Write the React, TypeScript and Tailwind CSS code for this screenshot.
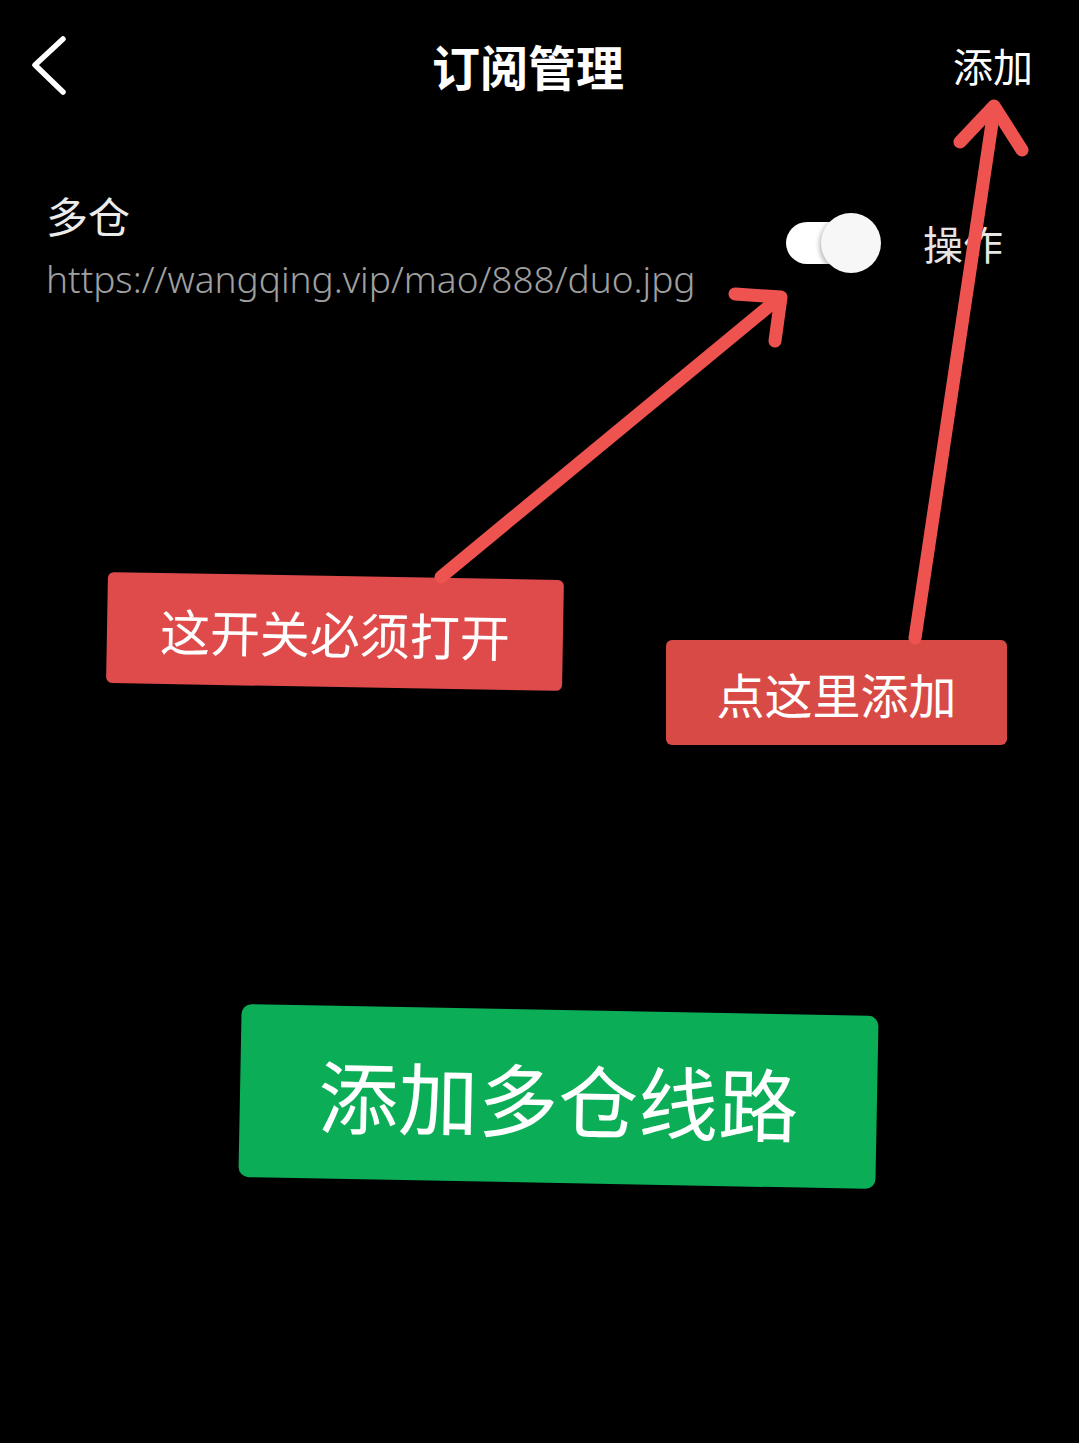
import React from "react";

const cjk = { fontFamily: '"Noto Sans CJK SC", "Noto Sans", sans-serif' };
const latin = { fontFamily: '"Noto Sans", "Noto Sans CJK SC", sans-serif' };

export default function App() {
  return (
    <div className="relative w-[1079px] h-[1443px] bg-black overflow-hidden" style={cjk}>
      {/* Header */}
      <div className="flex items-center h-[130px] pl-[30px] pr-[46px]">
        <svg width="40" height="60" viewBox="0 0 40 60" className="shrink-0 mt-[2px]">
          <polyline points="33,3 5,29 33,56" fill="none" stroke="#ffffff" strokeWidth="5.5" strokeLinecap="round" strokeLinejoin="round" />
        </svg>
        <div className="ml-[362px] text-[48px] leading-none font-bold text-white">订阅管理</div>
        <div className="ml-auto text-[40px] leading-none text-white">添加</div>
      </div>

      {/* Item row */}
      <div className="flex items-start pl-[46px] pr-[76px] mt-[60px]">
        <div className="flex flex-col">
          <div className="text-[42px] leading-[50px] text-[#ececec]">多仓</div>
          <div className="mt-[16px] text-[37px] leading-[46px] text-[#a0a0a0] font-light" style={latin}>
            https://wangqing.vip/mao/888/duo.jpg
          </div>
        </div>
        <div className="ml-auto flex items-center mt-[23px]">
          <div className="relative w-[95px] h-[60px] flex items-center">
            <div className="w-[80px] h-[42px] rounded-full bg-white" />
            <div className="absolute right-0 top-0 w-[60px] h-[60px] rounded-full bg-[#f7f7f7] shadow-[-2px_2px_4px_rgba(0,0,0,0.25)]" />
          </div>
          <div className="ml-[42px] text-[40px] leading-none text-[#e6e6e6]">操作</div>
        </div>
      </div>

      {/* Annotation labels */}
      <div className="absolute left-[107px] top-[576px] w-[456px] h-[111px] rounded-[6px] bg-[#df4b4b] rotate-[1deg] flex items-center justify-center">
        <span className="text-[50px] leading-none text-white">这开关必须打开</span>
      </div>
      <div className="absolute left-[666px] top-[640px] w-[341px] h-[105px] rounded-[6px] bg-[#d84a45] flex items-center justify-center">
        <span className="text-[48px] leading-none text-white">点这里添加</span>
      </div>

      {/* Green button */}
      <div className="absolute left-[240px] top-[1010px] w-[637px] h-[173px] rounded-[10px] bg-[#0bad57] rotate-[1.08deg] flex items-center justify-center">
        <span className="text-[80px] leading-none text-white">添加多仓线路</span>
      </div>

      {/* Arrows */}
      <svg className="absolute inset-0 pointer-events-none" width="1079" height="1443" viewBox="0 0 1079 1443">
        <g fill="none" stroke="#ee5350" strokeWidth="13" strokeLinecap="round" strokeLinejoin="round">
          <line x1="441" y1="577" x2="779" y2="298" />
          <polyline points="735,294 781,297 775,341" />
          <line x1="915" y1="638" x2="994" y2="110" />
          <polyline points="960,142 994,106 1022,150" />
        </g>
      </svg>
    </div>
  );
}
